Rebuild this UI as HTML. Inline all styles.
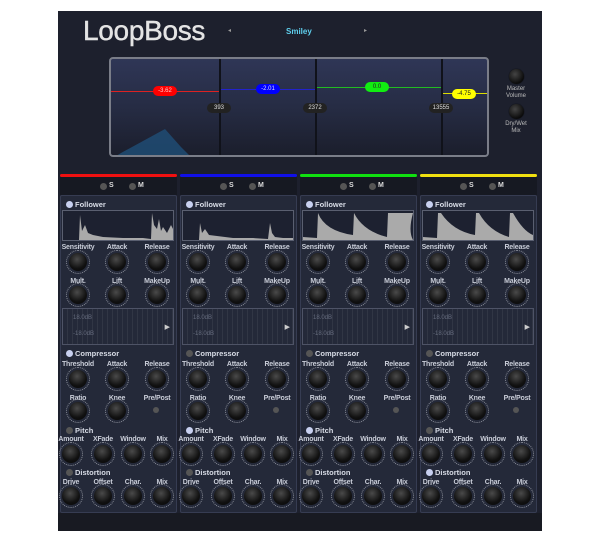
<!DOCTYPE html>
<html><head><style>
*{margin:0;padding:0;box-sizing:border-box}
body{width:600px;height:543px;background:#fff;position:relative;overflow:hidden;font-family:"Liberation Sans",sans-serif}
.main{position:absolute;left:58px;top:11px;width:484px;height:520px;background:#1d202d}
.title{position:absolute;left:83px;top:15px;font-size:28px;color:#e4e4e4;letter-spacing:-0.3px;-webkit-text-stroke:0.4px #e4e4e4}
.preset{position:absolute;left:286px;top:27px;font-size:8px;font-weight:bold;color:#5fd0ee}
.arr{position:absolute;top:27px;font-size:6px;color:#999}
.disp{position:absolute;left:109px;top:57px;width:380px;height:100px;border:2px solid #7a7d88;border-radius:4px;background:linear-gradient(#2f3656,#262c44 50%,#1b1e2c);overflow:hidden}
.vd{position:absolute;top:0;width:2px;height:100px;background:#10121a}
.hl{position:absolute;height:1px}
.pill{position:absolute;height:10px;border-radius:5px;font-size:6px;text-align:center;line-height:10px;color:#222}
.fp{position:absolute;height:10px;border-radius:5px;background:#222;color:#ddd;font-size:6px;text-align:center;line-height:10px;width:24px}
.mk{position:absolute;width:15px;height:15px;border-radius:50%;background:radial-gradient(circle at 40% 35%,#444,#0b0b0b 70%);box-shadow:0 0 1px #000}
.ml{position:absolute;font-size:6px;color:#bbb;text-align:center;width:40px;line-height:7px}
.st{position:absolute;top:174px;width:117px;height:339px}
.bar{position:absolute;left:0;top:0;width:117px;height:3px;border-radius:2px}
.hd{position:absolute;left:0;top:3px;width:117px;height:18px;background:#161922}
.bd{position:absolute;left:0;top:21px;width:117px;height:318px;background:#242939;border:1px solid #363c52;border-radius:2px}
.dot{position:absolute;width:7px;height:7px;border-radius:50%;background:#555}
.on{background:#c8d0f0}
.sm{position:absolute;font-size:7px;color:#ddd;font-weight:bold}
.sec{position:absolute;font-size:7.5px;color:#d8dce6;left:15px;font-weight:bold}
.lb{position:absolute;font-size:7px;color:#c9cdd8;width:46px;text-align:center;font-weight:bold;letter-spacing:-0.2px}
.k{position:absolute;width:18px;height:18px;border-radius:50%;background:radial-gradient(circle at 45% 35%,#4a4a4a,#111 60%,#050505);}
.k:before{content:"";position:absolute;left:-3px;top:-3px;width:22px;height:22px;border-radius:50%;border:1px dotted #8a8e99}
.wv{position:absolute;left:2px;top:36px;width:112px;height:31px;border:1px solid #5a5f70;background:#1d2130}
.gr{position:absolute;left:2px;top:134px;width:112px;height:37px;border:1px solid #4e5366;background:repeating-linear-gradient(90deg,transparent 0 4px,rgba(255,255,255,.06) 4px 5px)}
.gt{position:absolute;font-size:6px;color:#666c7e;left:10px}
.led{position:absolute;width:6px;height:6px;border-radius:50%;background:#555;left:93px;top:233px}
.foot{position:absolute;left:58px;top:513px;width:484px;height:18px;background:#181a22}
</style></head><body>
<div class="main"></div>
<div class="title">LoopBoss</div>
<div class="arr" style="left:228px">◂</div>
<div class="preset">Smiley</div>
<div class="arr" style="left:364px">▸</div>
<div class="disp">
<svg style="position:absolute;left:0;top:0" width="380" height="100"><path d="M0,100 L10,94 L54,70 L70,88 L82,100 Z" fill="#1f4f78" opacity=".8"/></svg>
<div class="hl" style="left:0;top:32px;width:108px;background:#d22"></div>
<div class="hl" style="left:110px;top:30px;width:96px;background:#22c"></div>
<div class="hl" style="left:206px;top:28px;width:126px;background:#2b2"></div>
<div class="hl" style="left:332px;top:34px;width:48px;background:#dd0"></div>
<div class="vd" style="left:108px"></div><div class="vd" style="left:204px"></div><div class="vd" style="left:330px"></div>
<div class="pill" style="left:42px;top:27px;width:24px;background:#f00;color:#fcc">-3.62</div>
<div class="pill" style="left:145px;top:25px;width:24px;background:#00f;color:#ddf">-2.01</div>
<div class="pill" style="left:254px;top:23px;width:24px;background:#1e1">0.0</div>
<div class="pill" style="left:341px;top:30px;width:24px;background:#ff0">-4.75</div>
<div class="fp" style="left:96px;top:44px">393</div>
<div class="fp" style="left:192px;top:44px">2372</div>
<div class="fp" style="left:318px;top:44px">13555</div>
</div>
<div class="mk" style="left:509px;top:69px"></div>
<div class="ml" style="left:496px;top:86px">Master<br>Volume</div>
<div class="mk" style="left:509px;top:104px"></div>
<div class="ml" style="left:496px;top:121px">Dry/Wet<br>Mix</div>

<div class="st" style="left:60px">
<div class="bar" style="background:#f01010"></div><div class="hd"><div class="dot" style="left:40px;top:6px"></div><div class="sm" style="left:49px;top:5px">S</div><div class="dot" style="left:69px;top:6px"></div><div class="sm" style="left:78px;top:5px">M</div></div>
<div class="bd"></div>
<div class="dot on" style="left:6px;top:27px"></div><div class="sec" style="top:26px">Follower</div>
<div class="wv"><svg width="110" height="29"><path d="M0,29 L16,29 L17,4 L19,20 L22,14 L25,22 L30,24 L40,26 L60,27 L80,27 L88,28 L89,2 L91,14 L94,18 L96,8 L98,20 L100,16 L104,22 L108,14 L110,18 L110,29Z" fill="#aaa"/></svg></div>
<div class="lb" style="left:-5px;top:70px">Sensitivity</div><div class="lb" style="left:34px;top:70px">Attack</div><div class="lb" style="left:74px;top:70px">Release</div>
<div class="k" style="left:9px;top:79px"></div><div class="k" style="left:48px;top:79px"></div><div class="k" style="left:88px;top:79px"></div>
<div class="lb" style="left:-5px;top:104px">Mult.</div><div class="lb" style="left:34px;top:104px">Lift</div><div class="lb" style="left:74px;top:104px">MakeUp</div>
<div class="k" style="left:9px;top:112px"></div><div class="k" style="left:48px;top:112px"></div><div class="k" style="left:88px;top:112px"></div>
<div class="gr"><div class="gt" style="top:6px">18.0dB</div><div class="gt" style="top:22px">-18.0dB</div><div style="position:absolute;right:3px;top:14px;color:#ccc;font-size:7px">▶</div></div>
<div class="dot on" style="left:6px;top:176px"></div><div class="sec" style="top:175px">Compressor</div>
<div class="lb" style="left:-5px;top:187px">Threshold</div><div class="lb" style="left:34px;top:187px">Attack</div><div class="lb" style="left:74px;top:187px">Release</div>
<div class="k" style="left:9px;top:196px"></div><div class="k" style="left:48px;top:196px"></div><div class="k" style="left:88px;top:196px"></div>
<div class="lb" style="left:-5px;top:221px">Ratio</div><div class="lb" style="left:34px;top:221px">Knee</div><div class="lb" style="left:74px;top:221px">Pre/Post</div>
<div class="k" style="left:9px;top:228px"></div><div class="k" style="left:48px;top:228px"></div><div class="led"></div>
<div class="dot" style="left:6px;top:253px"></div><div class="sec" style="top:252px">Pitch</div>
<div class="lb" style="left:-12px;top:262px">Amount</div><div class="lb" style="left:20px;top:262px">XFade</div><div class="lb" style="left:50px;top:262px">Window</div><div class="lb" style="left:79px;top:262px">Mix</div>
<div class="k" style="left:2px;top:271px"></div><div class="k" style="left:34px;top:271px"></div><div class="k" style="left:64px;top:271px"></div><div class="k" style="left:93px;top:271px"></div>
<div class="dot" style="left:6px;top:295px"></div><div class="sec" style="top:294px">Distortion</div>
<div class="lb" style="left:-12px;top:305px">Drive</div><div class="lb" style="left:20px;top:305px">Offset</div><div class="lb" style="left:50px;top:305px">Char.</div><div class="lb" style="left:79px;top:305px">Mix</div>
<div class="k" style="left:2px;top:313px"></div><div class="k" style="left:34px;top:313px"></div><div class="k" style="left:64px;top:313px"></div><div class="k" style="left:93px;top:313px"></div>
</div>

<div class="st" style="left:180px">
<div class="bar" style="background:#1010e8"></div><div class="hd"><div class="dot" style="left:40px;top:6px"></div><div class="sm" style="left:49px;top:5px">S</div><div class="dot" style="left:69px;top:6px"></div><div class="sm" style="left:78px;top:5px">M</div></div>
<div class="bd"></div>
<div class="dot on" style="left:6px;top:27px"></div><div class="sec" style="top:26px">Follower</div>
<div class="wv"><svg width="110" height="29"><path d="M0,29 L16,29 L17,12 L19,22 L22,18 L26,24 L34,25 L50,27 L70,27 L85,28 L87,12 L89,22 L92,26 L100,27 L110,27 L110,29Z" fill="#aaa"/></svg></div>
<div class="lb" style="left:-5px;top:70px">Sensitivity</div><div class="lb" style="left:34px;top:70px">Attack</div><div class="lb" style="left:74px;top:70px">Release</div>
<div class="k" style="left:9px;top:79px"></div><div class="k" style="left:48px;top:79px"></div><div class="k" style="left:88px;top:79px"></div>
<div class="lb" style="left:-5px;top:104px">Mult.</div><div class="lb" style="left:34px;top:104px">Lift</div><div class="lb" style="left:74px;top:104px">MakeUp</div>
<div class="k" style="left:9px;top:112px"></div><div class="k" style="left:48px;top:112px"></div><div class="k" style="left:88px;top:112px"></div>
<div class="gr"><div class="gt" style="top:6px">18.0dB</div><div class="gt" style="top:22px">-18.0dB</div><div style="position:absolute;right:3px;top:14px;color:#ccc;font-size:7px">▶</div></div>
<div class="dot" style="left:6px;top:176px"></div><div class="sec" style="top:175px">Compressor</div>
<div class="lb" style="left:-5px;top:187px">Threshold</div><div class="lb" style="left:34px;top:187px">Attack</div><div class="lb" style="left:74px;top:187px">Release</div>
<div class="k" style="left:9px;top:196px"></div><div class="k" style="left:48px;top:196px"></div><div class="k" style="left:88px;top:196px"></div>
<div class="lb" style="left:-5px;top:221px">Ratio</div><div class="lb" style="left:34px;top:221px">Knee</div><div class="lb" style="left:74px;top:221px">Pre/Post</div>
<div class="k" style="left:9px;top:228px"></div><div class="k" style="left:48px;top:228px"></div><div class="led"></div>
<div class="dot on" style="left:6px;top:253px"></div><div class="sec" style="top:252px">Pitch</div>
<div class="lb" style="left:-12px;top:262px">Amount</div><div class="lb" style="left:20px;top:262px">XFade</div><div class="lb" style="left:50px;top:262px">Window</div><div class="lb" style="left:79px;top:262px">Mix</div>
<div class="k" style="left:2px;top:271px"></div><div class="k" style="left:34px;top:271px"></div><div class="k" style="left:64px;top:271px"></div><div class="k" style="left:93px;top:271px"></div>
<div class="dot" style="left:6px;top:295px"></div><div class="sec" style="top:294px">Distortion</div>
<div class="lb" style="left:-12px;top:305px">Drive</div><div class="lb" style="left:20px;top:305px">Offset</div><div class="lb" style="left:50px;top:305px">Char.</div><div class="lb" style="left:79px;top:305px">Mix</div>
<div class="k" style="left:2px;top:313px"></div><div class="k" style="left:34px;top:313px"></div><div class="k" style="left:64px;top:313px"></div><div class="k" style="left:93px;top:313px"></div>
</div>

<div class="st" style="left:300px">
<div class="bar" style="background:#10e010"></div><div class="hd"><div class="dot" style="left:40px;top:6px"></div><div class="sm" style="left:49px;top:5px">S</div><div class="dot" style="left:69px;top:6px"></div><div class="sm" style="left:78px;top:5px">M</div></div>
<div class="bd"></div>
<div class="dot on" style="left:6px;top:27px"></div><div class="sec" style="top:26px">Follower</div>
<div class="wv"><svg width="110" height="29"><path d="M0,29 L0,26 L14,27 L15,2 Q22,20 50,24 L51,2 Q60,20 84,26 L85,2 L110,2 Q105,20 110,29 Z" fill="#aaa"/></svg></div>
<div class="lb" style="left:-5px;top:70px">Sensitivity</div><div class="lb" style="left:34px;top:70px">Attack</div><div class="lb" style="left:74px;top:70px">Release</div>
<div class="k" style="left:9px;top:79px"></div><div class="k" style="left:48px;top:79px"></div><div class="k" style="left:88px;top:79px"></div>
<div class="lb" style="left:-5px;top:104px">Mult.</div><div class="lb" style="left:34px;top:104px">Lift</div><div class="lb" style="left:74px;top:104px">MakeUp</div>
<div class="k" style="left:9px;top:112px"></div><div class="k" style="left:48px;top:112px"></div><div class="k" style="left:88px;top:112px"></div>
<div class="gr"><div class="gt" style="top:6px">18.0dB</div><div class="gt" style="top:22px">-18.0dB</div><div style="position:absolute;right:3px;top:14px;color:#ccc;font-size:7px">▶</div></div>
<div class="dot" style="left:6px;top:176px"></div><div class="sec" style="top:175px">Compressor</div>
<div class="lb" style="left:-5px;top:187px">Threshold</div><div class="lb" style="left:34px;top:187px">Attack</div><div class="lb" style="left:74px;top:187px">Release</div>
<div class="k" style="left:9px;top:196px"></div><div class="k" style="left:48px;top:196px"></div><div class="k" style="left:88px;top:196px"></div>
<div class="lb" style="left:-5px;top:221px">Ratio</div><div class="lb" style="left:34px;top:221px">Knee</div><div class="lb" style="left:74px;top:221px">Pre/Post</div>
<div class="k" style="left:9px;top:228px"></div><div class="k" style="left:48px;top:228px"></div><div class="led"></div>
<div class="dot on" style="left:6px;top:253px"></div><div class="sec" style="top:252px">Pitch</div>
<div class="lb" style="left:-12px;top:262px">Amount</div><div class="lb" style="left:20px;top:262px">XFade</div><div class="lb" style="left:50px;top:262px">Window</div><div class="lb" style="left:79px;top:262px">Mix</div>
<div class="k" style="left:2px;top:271px"></div><div class="k" style="left:34px;top:271px"></div><div class="k" style="left:64px;top:271px"></div><div class="k" style="left:93px;top:271px"></div>
<div class="dot" style="left:6px;top:295px"></div><div class="sec" style="top:294px">Distortion</div>
<div class="lb" style="left:-12px;top:305px">Drive</div><div class="lb" style="left:20px;top:305px">Offset</div><div class="lb" style="left:50px;top:305px">Char.</div><div class="lb" style="left:79px;top:305px">Mix</div>
<div class="k" style="left:2px;top:313px"></div><div class="k" style="left:34px;top:313px"></div><div class="k" style="left:64px;top:313px"></div><div class="k" style="left:93px;top:313px"></div>
</div>

<div class="st" style="left:420px">
<div class="bar" style="background:#f0e010"></div><div class="hd"><div class="dot" style="left:40px;top:6px"></div><div class="sm" style="left:49px;top:5px">S</div><div class="dot" style="left:69px;top:6px"></div><div class="sm" style="left:78px;top:5px">M</div></div>
<div class="bd"></div>
<div class="dot on" style="left:6px;top:27px"></div><div class="sec" style="top:26px">Follower</div>
<div class="wv"><svg width="110" height="29"><path d="M0,29 L0,26 L14,27 L15,2 L18,2 Q30,20 52,24 L53,2 L56,2 Q66,20 86,26 L87,2 L90,2 Q100,20 110,24 L110,29 Z" fill="#aaa"/></svg></div>
<div class="lb" style="left:-5px;top:70px">Sensitivity</div><div class="lb" style="left:34px;top:70px">Attack</div><div class="lb" style="left:74px;top:70px">Release</div>
<div class="k" style="left:9px;top:79px"></div><div class="k" style="left:48px;top:79px"></div><div class="k" style="left:88px;top:79px"></div>
<div class="lb" style="left:-5px;top:104px">Mult.</div><div class="lb" style="left:34px;top:104px">Lift</div><div class="lb" style="left:74px;top:104px">MakeUp</div>
<div class="k" style="left:9px;top:112px"></div><div class="k" style="left:48px;top:112px"></div><div class="k" style="left:88px;top:112px"></div>
<div class="gr"><div class="gt" style="top:6px">18.0dB</div><div class="gt" style="top:22px">-18.0dB</div><div style="position:absolute;right:3px;top:14px;color:#ccc;font-size:7px">▶</div></div>
<div class="dot" style="left:6px;top:176px"></div><div class="sec" style="top:175px">Compressor</div>
<div class="lb" style="left:-5px;top:187px">Threshold</div><div class="lb" style="left:34px;top:187px">Attack</div><div class="lb" style="left:74px;top:187px">Release</div>
<div class="k" style="left:9px;top:196px"></div><div class="k" style="left:48px;top:196px"></div><div class="k" style="left:88px;top:196px"></div>
<div class="lb" style="left:-5px;top:221px">Ratio</div><div class="lb" style="left:34px;top:221px">Knee</div><div class="lb" style="left:74px;top:221px">Pre/Post</div>
<div class="k" style="left:9px;top:228px"></div><div class="k" style="left:48px;top:228px"></div><div class="led"></div>
<div class="dot" style="left:6px;top:253px"></div><div class="sec" style="top:252px">Pitch</div>
<div class="lb" style="left:-12px;top:262px">Amount</div><div class="lb" style="left:20px;top:262px">XFade</div><div class="lb" style="left:50px;top:262px">Window</div><div class="lb" style="left:79px;top:262px">Mix</div>
<div class="k" style="left:2px;top:271px"></div><div class="k" style="left:34px;top:271px"></div><div class="k" style="left:64px;top:271px"></div><div class="k" style="left:93px;top:271px"></div>
<div class="dot on" style="left:6px;top:295px"></div><div class="sec" style="top:294px">Distortion</div>
<div class="lb" style="left:-12px;top:305px">Drive</div><div class="lb" style="left:20px;top:305px">Offset</div><div class="lb" style="left:50px;top:305px">Char.</div><div class="lb" style="left:79px;top:305px">Mix</div>
<div class="k" style="left:2px;top:313px"></div><div class="k" style="left:34px;top:313px"></div><div class="k" style="left:64px;top:313px"></div><div class="k" style="left:93px;top:313px"></div>
</div>
<div class="foot"></div>
</body></html>
